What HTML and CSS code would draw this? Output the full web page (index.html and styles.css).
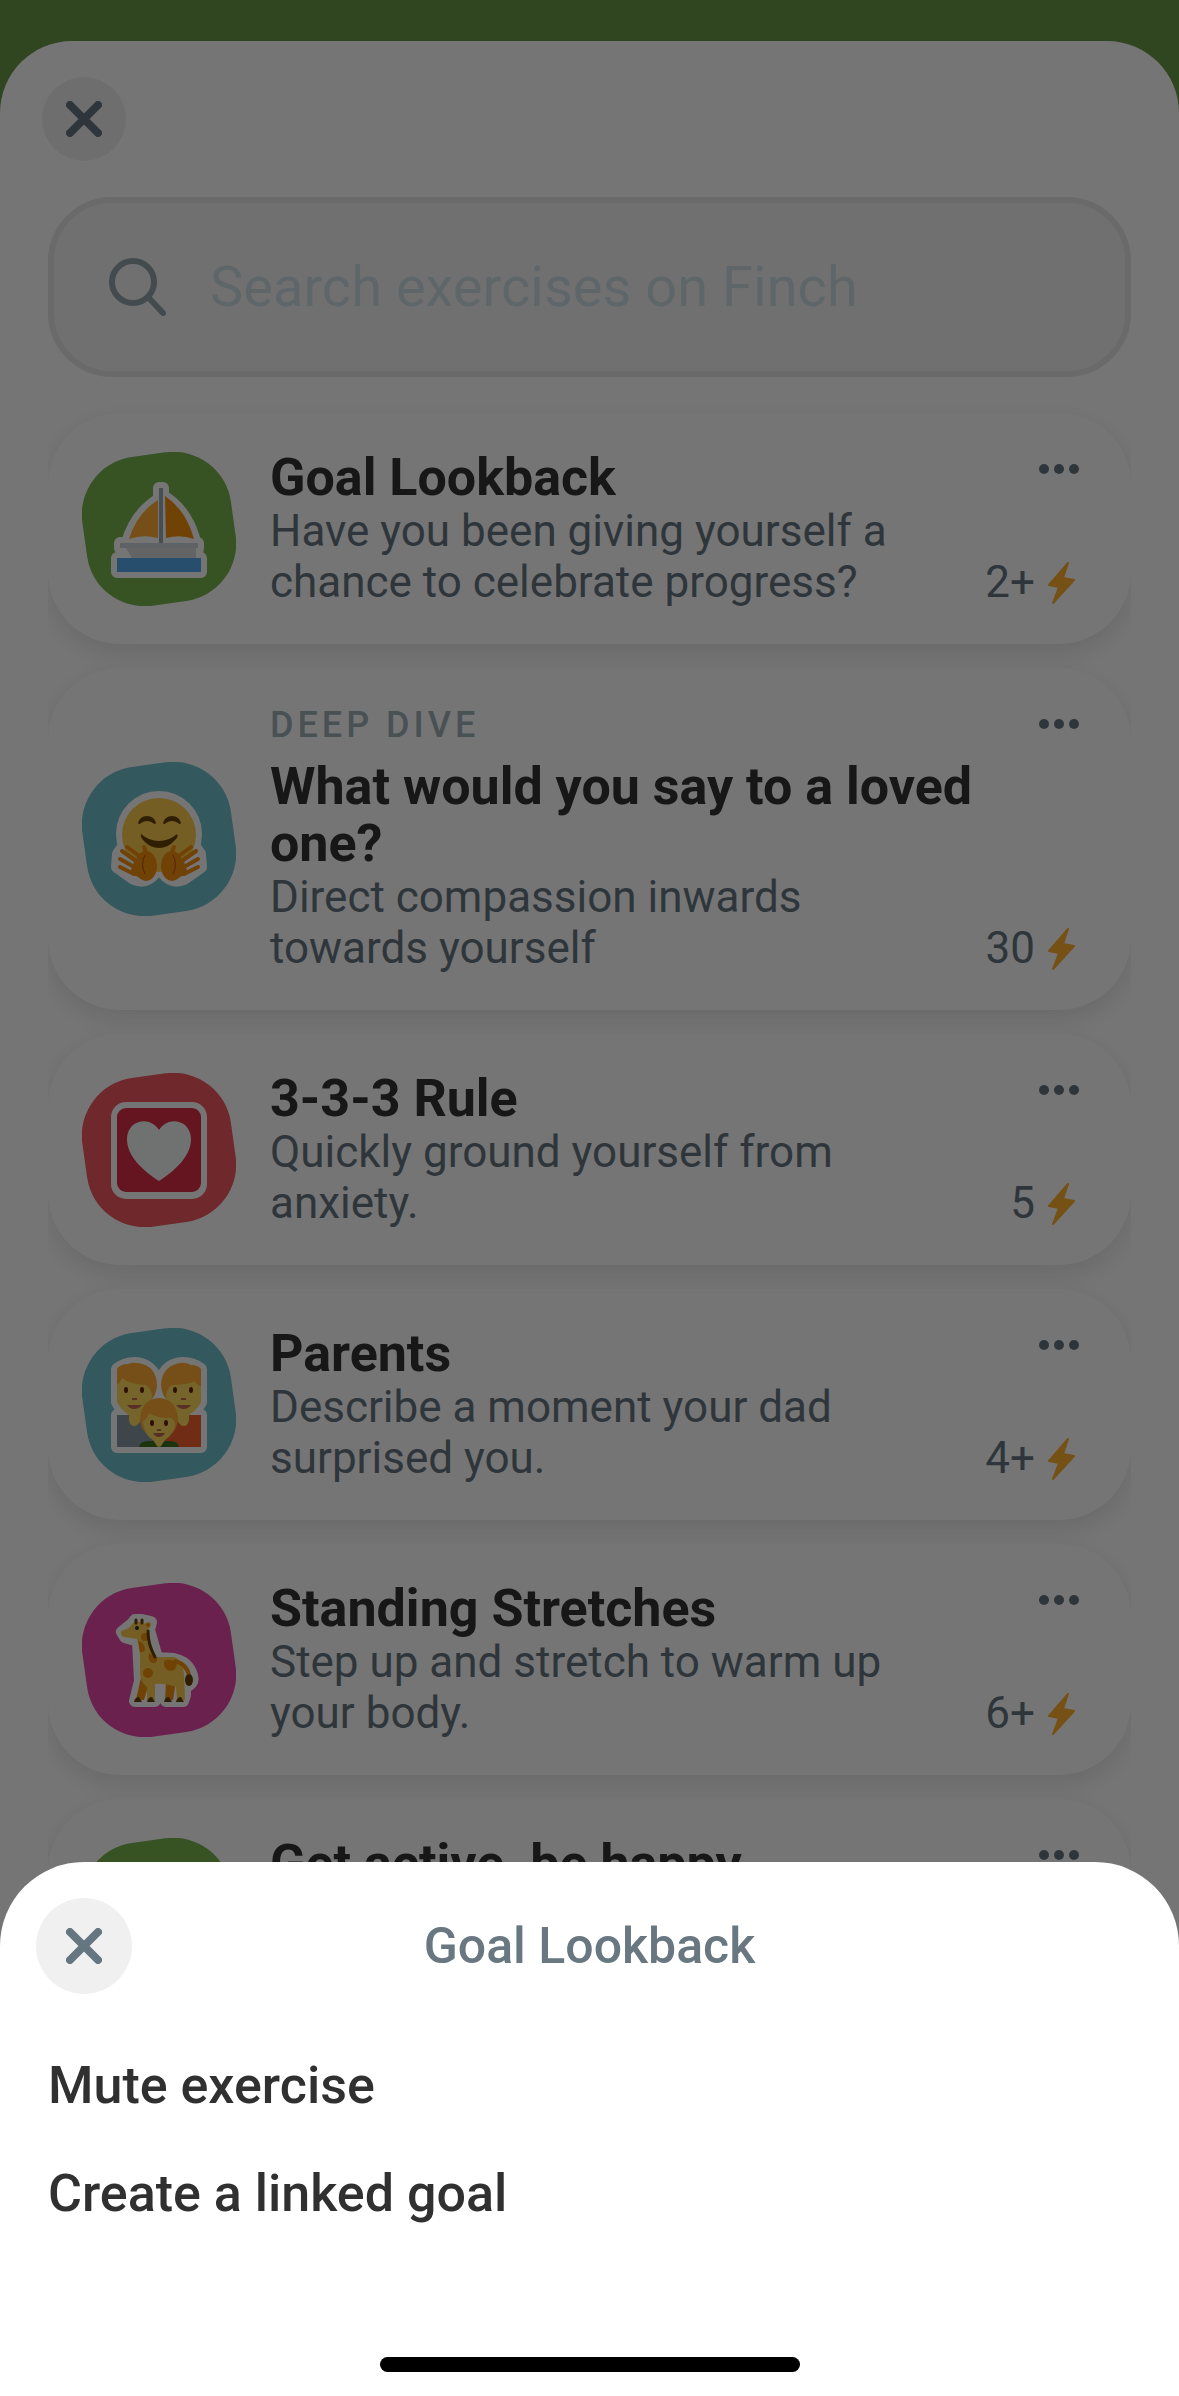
FILE: index.html
```html
<!DOCTYPE html>
<html lang="en">
<head>
    <meta charset="UTF-8">
    <meta name="viewport" content="width=device-width, initial-scale=1.0">
    <title>Exercises - Finch</title>
    <link rel="stylesheet" href="styles.css">
</head>
<body>
    <main class="page">
        <button class="close-btn" type="button" aria-label="Close">
            <svg class="close-icon" viewBox="0 0 36 36"><path d="M4 4 L32 32 M32 4 L4 32"/></svg>
        </button>

        <label class="search">
            <svg class="search-icon" viewBox="0 0 58 58"><circle cx="25" cy="24" r="21"/><path d="M40 39 L55 55"/></svg>
            <input class="search-input" type="search" placeholder="Search exercises on Finch" aria-label="Search exercises on Finch">
        </label>

        <ul class="exercise-list">
            <li class="card">
                <svg class="card-icon" viewBox="0 0 154 154">
                    <rect class="blob green" x="2" y="2" width="150" height="150" rx="58"/>
                    <!-- sailboat -->
                    <g class="sticker">
                        <path d="M77 36 H81 V44 Q104 58 112 86 L113 91 H116 V96 L114 106 H119 V120 H35 V106 H50 L38 96 V91 H45 Q53 62 77 47 Z"/>
                    </g>
                    <path fill="#ffac33" d="M76 48 V86 Q61 82 47 87 Q55 61 76 48 Z"/>
                    <path fill="#f4900c" d="M83 44 Q104 58 112 87 Q98 82 84 86 Z"/>
                    <path fill="#99aab5" d="M77 36 H81 V91 H77 Z"/>
                    <path fill="#ccd6dd" d="M38 91 H116 V96 H38 Z"/>
                    <path fill="#d5dade" d="M44 96 H114 V106 H50 Z"/>
                    <path fill="#55acee" d="M35 106 H119 V120 H35 Z"/>
                </svg>
                <div class="card-text">
                    <h2 class="card-title">Goal Lookback</h2>
                    <p class="card-desc">Have you been giving yourself a chance to celebrate progress?</p>
                </div>
                <div class="card-side">
                    <button class="more-btn" type="button" aria-label="More options">
                        <svg class="more-icon" viewBox="0 0 40 10"><circle cx="5" cy="5" r="5"/><circle cx="20" cy="5" r="5"/><circle cx="35" cy="5" r="5"/></svg>
                    </button>
                    <span class="energy">2+ <svg class="bolt" viewBox="0 0 28 42"><path d="M21 1 L2 23 L12 25 L6 41 L27 18 L16 16 Z"/></svg></span>
                </div>
            </li>

            <li class="card">
                <svg class="card-icon" viewBox="0 0 154 154">
                    <rect class="blob teal" x="2" y="2" width="150" height="150" rx="58"/>
                    <!-- hugging face -->
                    <g class="sticker">
                        <circle cx="77" cy="72" r="37"/>
                        <path d="M43 82 L36 92 L35 105 L52 117 Q64 122 73 111 L77 108 L81 111 Q90 122 102 117 L119 105 L118 92 L111 82 Z"/>
                    </g>
                    <circle cx="77" cy="73" r="37" fill="#ffcc4d"/>
                    <g fill="#664500">
                        <path d="M56 61 Q58 54 65 54 Q72 54 74 61 Q73 63 71 61 Q65 57 59 61 Q57 63 56 61 Z"/>
                        <path d="M81 61 Q83 54 90 54 Q97 54 99 61 Q98 63 96 61 Q90 57 84 61 Q82 63 81 61 Z"/>
                        <path d="M59 72 Q58 75 62 79 Q68 86 77 86 Q86 86 92 79 Q97 75 95 72 Q87 79 77 79 Q67 79 59 72 Z"/>
                    </g>
                    <g class="hand">
                        <path d="M45 85 L60 96 M40 89 L57 101 M38 97 L54 106 M38 105 L52 112 M62 85 L67 98"/>
                        <ellipse cx="64" cy="104" rx="11" ry="15" stroke="none"/>
                        <path d="M52 100 L62 94 L62 118 L48 111 Z" stroke="none"/>
                        <path class="crease" d="M63 93 Q58 103 63 112"/>
                    </g>
                    <g class="hand">
                        <path d="M109 85 L94 96 M114 89 L97 101 M116 97 L100 106 M116 105 L102 112 M92 85 L87 98"/>
                        <ellipse cx="90" cy="104" rx="11" ry="15" stroke="none"/>
                        <path d="M102 100 L92 94 L92 118 L106 111 Z" stroke="none"/>
                        <path class="crease" d="M91 93 Q96 103 91 112"/>
                    </g>
                </svg>
                <div class="card-text">
                    <p class="card-label">DEEP DIVE</p>
                    <h2 class="card-title">What would you say to a loved one?</h2>
                    <p class="card-desc">Direct compassion inwards towards yourself</p>
                </div>
                <div class="card-side">
                    <button class="more-btn" type="button" aria-label="More options">
                        <svg class="more-icon" viewBox="0 0 40 10"><circle cx="5" cy="5" r="5"/><circle cx="20" cy="5" r="5"/><circle cx="35" cy="5" r="5"/></svg>
                    </button>
                    <span class="energy">30 <svg class="bolt" viewBox="0 0 28 42"><path d="M21 1 L2 23 L12 25 L6 41 L27 18 L16 16 Z"/></svg></span>
                </div>
            </li>

            <li class="card">
                <svg class="card-icon" viewBox="0 0 154 154">
                    <rect class="blob red" x="2" y="2" width="150" height="150" rx="58"/>
                    <!-- heart tile -->
                    <rect x="29" y="29" width="96" height="97" rx="15" fill="#fff"/>
                    <rect x="35" y="35" width="84" height="84" rx="9" fill="#dd2e44"/>
                    <path fill="#f4f9f6" d="M77 108 C60 97 45 83 45 66 C45 47 68 42 77 57 C86 42 109 47 109 66 C109 83 94 97 77 108 Z"/>
                </svg>
                <div class="card-text">
                    <h2 class="card-title">3-3-3 Rule</h2>
                    <p class="card-desc">Quickly ground yourself from anxiety.</p>
                </div>
                <div class="card-side">
                    <button class="more-btn" type="button" aria-label="More options">
                        <svg class="more-icon" viewBox="0 0 40 10"><circle cx="5" cy="5" r="5"/><circle cx="20" cy="5" r="5"/><circle cx="35" cy="5" r="5"/></svg>
                    </button>
                    <span class="energy">5 <svg class="bolt" viewBox="0 0 28 42"><path d="M21 1 L2 23 L12 25 L6 41 L27 18 L16 16 Z"/></svg></span>
                </div>
            </li>

            <li class="card">
                <svg class="card-icon" viewBox="0 0 154 154">
                    <rect class="blob teal" x="2" y="2" width="150" height="150" rx="58"/>
                    <!-- family -->
                    <g class="sticker">
                        <path d="M35 41 Q43 35 53 35 Q69 36 75 52 H79 Q84 36 101 35 Q111 35 119 41 V74 L111 87 H119 V119 H35 V87 H43 L35 74 Z"/>
                    </g>
                    <path fill="#8899a6" d="M35 87 H77 V119 H35 Z"/>
                    <path fill="#f4602e" d="M77 87 H119 V119 H77 Z"/>
                    <g>
                        <path fill="#ffac33" d="M35 41 Q38 36 46 36 Q50 34 56 35 Q75 38 75 58 Q74 68 68 73 H35 Z"/>
                        <path fill="#ffdc5d" d="M35 57 Q39 54 40 50 Q47 56 64 57 Q70 61 70 69 Q68 80 59 87 V92 Q56 98 52 98 Q48 98 47 92 V87 Q39 82 35 74 Z"/>
                        <ellipse cx="44" cy="62" rx="2" ry="3" fill="#662113"/>
                        <ellipse cx="60" cy="62" rx="2" ry="3" fill="#662113"/>
                        <path fill="#c1694f" d="M50 70 H55 V72 H50 Z M45 77 H60 Q57 81 52 81 Q48 81 45 77 Z"/>
                    </g>
                    <g>
                        <path fill="#ffac33" d="M119 41 Q116 37 109 37 Q104 34 98 35 Q80 38 79 57 Q80 68 86 73 H119 Z"/>
                        <path fill="#ffdc5d" d="M119 58 Q114 57 113 53 Q105 57 90 57 Q84 61 84 69 Q86 80 95 87 V92 Q98 98 102 98 Q106 98 107 92 V87 Q115 82 119 74 Z"/>
                        <ellipse cx="93" cy="62" rx="2" ry="3" fill="#662113"/>
                        <ellipse cx="109" cy="62" rx="2" ry="3" fill="#662113"/>
                        <path fill="#c1694f" d="M99 70 H104 V72 H99 Z M94 77 H109 Q106 81 102 81 Q97 81 94 77 Z"/>
                    </g>
                    <g>
                        <path fill="#3e721d" d="M57 119 Q58 113 66 113 H88 Q96 113 97 119 Z"/>
                        <path fill="#ffac33" d="M58 92 Q59 71 77 70 Q95 71 96 92 Q95 101 90 105 H64 Q59 101 58 92 Z"/>
                        <path fill="#ffdc5d" d="M61 93 Q65 91 67 85 Q73 90 89 90 Q94 93 93 98 Q91 107 83 112 L79 118 Q77 120 75 118 L71 112 Q62 107 61 93 Z"/>
                        <ellipse cx="70" cy="95" rx="2" ry="3" fill="#662113"/>
                        <ellipse cx="84" cy="95" rx="2" ry="3" fill="#662113"/>
                        <path fill="#c1694f" d="M75 101 H79 V103 H75 Z M71 105 H83 Q81 109 77 109 Q73 109 71 105 Z"/>
                    </g>
                </svg>
                <div class="card-text">
                    <h2 class="card-title">Parents</h2>
                    <p class="card-desc">Describe a moment your dad surprised you.</p>
                </div>
                <div class="card-side">
                    <button class="more-btn" type="button" aria-label="More options">
                        <svg class="more-icon" viewBox="0 0 40 10"><circle cx="5" cy="5" r="5"/><circle cx="20" cy="5" r="5"/><circle cx="35" cy="5" r="5"/></svg>
                    </button>
                    <span class="energy">4+ <svg class="bolt" viewBox="0 0 28 42"><path d="M21 1 L2 23 L12 25 L6 41 L27 18 L16 16 Z"/></svg></span>
                </div>
            </li>

            <li class="card">
                <svg class="card-icon" viewBox="0 0 154 154">
                    <rect class="blob pink" x="2" y="2" width="150" height="150" rx="58"/>
                    <!-- giraffe -->
                    <g class="sticker">
                        <path d="M40 49 L50 41 L53 37 H60 L69 39 L67 47 L75 75 L92 76 Q106 79 110 92 Q112 99 107 102 L103 98 V112 L101 118 H84 L86 102 H74 L73 118 H53 L58 98 L56 58 L43 54 Z"/>
                    </g>
                    <path fill="#f4900c" d="M60 90 H70 L62 117 H54 Q57 103 60 90 Z M84 98 H94 L91 117 H83 Z"/>
                    <path fill="#ffcc4d" d="M39 48 Q49 45 51 40 Q56 37 62 41 Q68 37 69 41 Q68 46 65 47 L67 56 L74 74 H92 Q101 77 102 92 L103 117 H95 L94 104 Q82 100 73 101 L73 117 H65 V104 Q57 98 58 86 Q59 68 55 56 Q50 55 42 54 Q38 52 39 48 Z"/>
                    <path d="M92 78 Q104 80 107 92" fill="none" stroke="#f4900c" stroke-width="4"/>
                    <g fill="#f4900c">
                        <circle cx="63" cy="54" r="4"/>
                        <path d="M56 58 Q63 60 63 66 Q62 70 58 69 Z"/>
                        <path d="M67 70 L75 75 Q76 80 71 80 Q65 79 67 70 Z"/>
                        <ellipse cx="66" cy="90" rx="5" ry="5"/>
                        <path d="M82 78 Q88 75 95 79 Q95 88 88 88 Q81 86 82 78 Z"/>
                        <circle cx="66" cy="42" r="2"/>
                    </g>
                    <path d="M66 48 Q66 62 73 74" fill="none" stroke="#664500" stroke-width="3" stroke-linecap="round"/>
                    <path d="M54 37 V40 M60 37 V40" stroke="#664500" stroke-width="3" stroke-linecap="round"/>
                    <circle cx="55" cy="45" r="2" fill="#292f33"/>
                    <ellipse cx="107" cy="97" rx="4" ry="6" fill="#664500"/>
                    <path fill="#664500" d="M52 119 Q53 114 57 114 L60 119 Z M65 119 Q66 114 70 114 L73 119 Z M82 119 Q83 114 87 114 L90 119 Z M94 119 Q95 114 99 114 L102 119 Z"/>
                </svg>
                <div class="card-text">
                    <h2 class="card-title">Standing Stretches</h2>
                    <p class="card-desc">Step up and stretch to warm up your body.</p>
                </div>
                <div class="card-side">
                    <button class="more-btn" type="button" aria-label="More options">
                        <svg class="more-icon" viewBox="0 0 40 10"><circle cx="5" cy="5" r="5"/><circle cx="20" cy="5" r="5"/><circle cx="35" cy="5" r="5"/></svg>
                    </button>
                    <span class="energy">6+ <svg class="bolt" viewBox="0 0 28 42"><path d="M21 1 L2 23 L12 25 L6 41 L27 18 L16 16 Z"/></svg></span>
                </div>
            </li>

            <li class="card card-last">
                <svg class="card-icon" viewBox="0 0 154 154">
                    <rect class="blob green" x="2" y="2" width="150" height="150" rx="58"/>
                </svg>
                <div class="card-text">
                    <h2 class="card-title">Get active, be happy</h2>
                </div>
                <div class="card-side">
                    <button class="more-btn" type="button" aria-label="More options">
                        <svg class="more-icon" viewBox="0 0 40 10"><circle cx="5" cy="5" r="5"/><circle cx="20" cy="5" r="5"/><circle cx="35" cy="5" r="5"/></svg>
                    </button>
                </div>
            </li>
        </ul>
    </main>

    <!-- dimmed layer with the options sheet at the bottom -->
    <div class="overlay">
        <section class="sheet" role="dialog" aria-labelledby="sheetTitle">
            <header class="sheet-header">
                <button class="close-btn close-btn-large" type="button" aria-label="Close">
                    <svg class="close-icon" viewBox="0 0 36 36"><path d="M4 4 L32 32 M32 4 L4 32"/></svg>
                </button>
                <h1 class="sheet-title" id="sheetTitle">Goal Lookback</h1>
            </header>
            <div class="sheet-menu">
                <button class="sheet-item" type="button">Mute exercise</button>
                <button class="sheet-item" type="button">Create a linked goal</button>
            </div>
            <div class="home-bar"></div>
        </section>
    </div>
</body>
</html>
```
FILE: styles.css
```css
* {
    box-sizing: border-box;
}
body {
    margin: 0;
    height: 100vh;
    padding-top: 41px;
    overflow: hidden;
    font-family: Roboto, 'Liberation Sans', sans-serif;
    font-size: 44px;
    color: #687780;
    background-color: #669a46;
}
h1, h2, p, ul {
    margin: 0;
    padding: 0;
}
button {
    font-family: inherit;
    color: inherit;
    border: none;
    padding: 0;
    cursor: pointer;
}
svg {
    display: block;
    flex-shrink: 0;
}
.page {
    min-height: 100%;
    padding: 36px 48px;
    border-radius: 72px 72px 0 0;
    background-color: #fff;
}

/* round close buttons */
.close-btn {
    display: flex;
    align-items: center;
    justify-content: center;
    width: 84px;
    height: 84px;
    margin-left: -6px;
    border-radius: 50%;
    background-color: #f0f0f0;
}
.close-btn-large {
    width: 96px;
    height: 96px;
    margin-left: 0;
}
.close-icon {
    width: 36px;
    height: 36px;
    fill: none;
    stroke: #657681;
    stroke-width: 8;
    stroke-linecap: round;
}

/* search box */
.search {
    display: flex;
    align-items: center;
    gap: 44px;
    height: 180px;
    margin-top: 36px;
    padding: 0 54px;
    border: 6px solid #e8e8e8;
    border-radius: 64px;
    background-color: #f5f5f5;
}
.search-icon {
    width: 58px;
    height: 58px;
    fill: none;
    stroke: #94a3ad;
    stroke-width: 6;
    stroke-linecap: round;
}
.search-input {
    flex: 1;
    min-width: 0;
    border: none;
    padding: 0;
    outline: none;
    background: none;
    font-family: inherit;
    font-size: 56px;
}
.search-input::placeholder {
    color: #d0dee7;
    opacity: 1;
}

/* exercise cards */
.exercise-list {
    display: flex;
    flex-direction: column;
    gap: 24px;
    margin-top: 36px;
    list-style: none;
    overflow-x: clip;
}
.card {
    display: flex;
    align-items: center;
    padding: 36px 52px 36px 34px;
    border-radius: 72px;
    background-color: #fff;
    box-shadow: 0 9px 24px rgba(0, 0, 0, 0.1);
}
.card-last {
    min-height: 231px;
}
.card-last .card-text {
    align-self: flex-start;
}
.card-icon {
    width: 154px;
    height: 154px;
    margin-right: 34px;
}
.card-text {
    flex: 1;
}
.card-label {
    margin-bottom: 11px;
    font-size: 36px;
    line-height: 43px;
    font-weight: 500;
    letter-spacing: 4px;
    color: #9fb0ba;
}
.card-title {
    font-size: 52px;
    line-height: 57px;
    font-weight: 700;
    color: #323232;
}
.card-desc {
    max-width: 640px;
    line-height: 51px;
}
.card-side {
    display: flex;
    flex-direction: column;
    align-items: flex-end;
    justify-content: space-between;
    align-self: stretch;
    min-width: 96px;
}
.more-btn {
    height: 40px;
    background: none;
}
.more-icon {
    width: 40px;
    height: 10px;
    fill: #687780;
}
.energy {
    display: flex;
    align-items: center;
    gap: 12px;
    padding-right: 4px;
    line-height: 51px;
}
.bolt {
    width: 28px;
    height: 42px;
    fill: #ffb02e;
    stroke: #ffb02e;
    stroke-width: 2;
    stroke-linejoin: round;
}

/* card pictures */
.blob {
    transform: rotate(-8deg);
    transform-origin: center;
}
.green {
    fill: #78b24e;
}
.teal {
    fill: #70bfcc;
}
.red {
    fill: #f2585f;
}
.pink {
    fill: #e648a9;
}
.sticker {
    fill: #fff;
    stroke: #fff;
    stroke-width: 12;
    stroke-linejoin: round;
}
.hand {
    fill: #f4900c;
    stroke: #f4900c;
    stroke-width: 4;
    stroke-linecap: round;
}
.hand .crease {
    fill: none;
    stroke: #b55005;
    stroke-width: 1;
}

/* options sheet */
.overlay {
    position: fixed;
    inset: 0;
    display: flex;
    flex-direction: column;
    justify-content: flex-end;
    background-color: rgba(0, 0, 0, 0.54);
}
.sheet {
    padding: 36px 36px 24px;
    border-radius: 84px 84px 0 0;
    background-color: #fff;
}
.sheet-header {
    display: grid;
    grid-template-columns: 96px 1fr 96px;
    align-items: center;
}
.sheet-title {
    font-size: 50px;
    line-height: 57px;
    font-weight: 500;
    text-align: center;
}
.sheet-menu {
    display: flex;
    flex-direction: column;
    align-items: flex-start;
    padding: 37px 12px 110px;
}
.sheet-item {
    height: 108px;
    font-size: 52px;
    font-weight: 500;
    color: #303030;
    background: none;
}
.home-bar {
    width: 420px;
    height: 15px;
    margin: 0 auto;
    border-radius: 8px;
    background-color: #000;
}
```
